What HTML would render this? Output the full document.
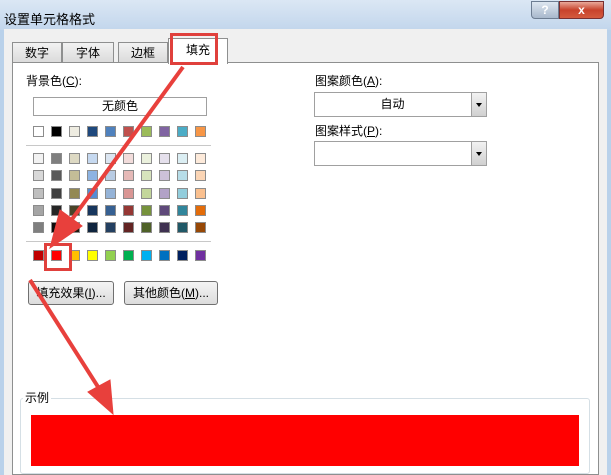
<!DOCTYPE html>
<html><head><meta charset="utf-8"><style>
*{margin:0;padding:0;box-sizing:border-box}
body{width:611px;height:475px;overflow:hidden;position:relative;font-family:"Liberation Sans","Noto Sans CJK SC",sans-serif;font-size:12px;color:#000;background:#b9d1ea}
.a{position:absolute}
.sw{position:absolute;width:11px;height:11px;border:1px solid #8c8c8c}
.btn{position:absolute;height:24px;border:1px solid #707070;border-radius:3px;background:linear-gradient(#f4f4f4,#dcdcdc);text-align:center;line-height:22px}
.combo{position:absolute;border:1px solid #a0a0a0;background:#fff;height:25px}
.dd{position:absolute;right:0;top:0;width:15px;height:23px;border-left:1px solid #a0a0a0;background:linear-gradient(#f2f2f2,#d0d0d0)}
.dd:after{content:"";position:absolute;left:4px;top:10px;border-left:3px solid transparent;border-right:3px solid transparent;border-top:4px solid #000}
</style></head><body>
<div class="a" style="left:0;top:0;width:611px;height:30px;background:linear-gradient(#dbe7f4,#c2d6ec)"></div>
<div class="a" style="left:4px;top:9px;font-size:13px">设置单元格格式</div>
<div class="a" style="left:531px;top:1px;width:28px;height:18px;border:1px solid #6d7d92;border-radius:0 0 0 4px;background:linear-gradient(#dde6f0,#a8b8cc);color:#fff;text-align:center;font-weight:bold;line-height:17px">?</div>
<div class="a" style="left:559px;top:1px;width:45px;height:18px;border:1px solid #7a3030;border-radius:0 0 4px 0;background:linear-gradient(#e9a99a,#c8432c 50%,#d45b3e);color:#fff;text-align:center;font-weight:bold;line-height:17px">x</div>
<div class="a" style="left:4px;top:29px;width:603px;height:446px;background:#f0f0f0"></div>
<!-- tabs -->
<div class="a" style="left:12px;top:42px;width:50px;height:21px;border:1px solid #8e8f8f;border-bottom:none;background:linear-gradient(#f2f2f2,#dadada);text-align:center;line-height:20px">数字</div>
<div class="a" style="left:62px;top:42px;width:52px;height:21px;border:1px solid #8e8f8f;border-bottom:none;background:linear-gradient(#f2f2f2,#dadada);text-align:center;line-height:20px">字体</div>
<div class="a" style="left:118px;top:42px;width:50px;height:21px;border:1px solid #8e8f8f;border-bottom:none;background:linear-gradient(#f2f2f2,#dadada);text-align:center;line-height:20px">边框</div>
<div class="a" style="left:12px;top:62px;width:587px;height:413px;background:#fff;border:1px solid #8e8f8f"></div>
<div class="a" style="left:168px;top:38px;width:60px;height:26px;background:#fff;border:1px solid #8e8f8f;border-bottom:none;text-align:center;line-height:22px">填充</div>
<div class="a" style="left:146px;top:33px;width:45px;height:32px;border:3px solid #e8413e;left:146px;display:none"></div>
<div class="a" style="left:170px;top:33px;width:48px;height:32px;border:3px solid #e0403c"></div>
<div class="a" style="left:26px;top:72px">背景色(<u>C</u>):</div>
<div class="a" style="left:33px;top:97px;width:174px;height:19px;border:1px solid #a0a0a0;text-align:center;line-height:17px">无颜色</div>
<div class="a" style="left:26px;top:145px;width:185px;height:1px;background:#c8c8c8"></div>
<div class="a" style="left:26px;top:241px;width:185px;height:1px;background:#c8c8c8"></div>
<div id="sw"></div>
<div class="a" style="left:44px;top:243px;width:28px;height:28px;border:3px solid #e0403c"></div>
<div class="btn" style="left:28px;top:281px;width:86px">填充效果(<u>I</u>)...</div>
<div class="btn" style="left:124px;top:281px;width:94px">其他颜色(<u>M</u>)...</div>
<div class="a" style="left:315px;top:72px">图案颜色(<u>A</u>):</div>
<div class="combo" style="left:314px;top:92px;width:173px"><div style="position:absolute;left:0;right:16px;text-align:center;line-height:23px">自动</div><div class="dd"></div></div>
<div class="a" style="left:315px;top:122px">图案样式(<u>P</u>):</div>
<div class="combo" style="left:314px;top:141px;width:173px"><div class="dd"></div></div>
<div class="a" style="left:20px;top:398px;width:570px;height:76px;border:1px solid #d5dfe5;border-radius:3px"></div>
<div class="a" style="left:23px;top:389px;background:#fff;padding:0 2px">示例</div>
<div class="a" style="left:31px;top:415px;width:548px;height:51px;background:#ff0000"></div>
<svg class="a" style="left:0;top:0" width="611" height="475">
<g fill="#e8403c" stroke="#e8403c">
<line x1="183" y1="67" x2="70" y2="222" stroke-width="4"/>
<polygon points="50,248 60,210 82,226"/>
<line x1="30" y1="280" x2="100" y2="390" stroke-width="4"/>
<polygon points="113,414 88,392 110,380"/>
</g></svg>
<script>
var c=[["#fff","#000","#eeece1","#1f497d","#4f81bd","#c0504d","#9bbb59","#8064a2","#4bacc6","#f79646"],
["#f2f2f2","#7f7f7f","#ddd9c3","#c6d9f0","#dbe5f1","#f2dcdb","#ebf1dd","#e5e0ec","#dbeef3","#fdeada"],
["#d8d8d8","#595959","#c4bd97","#8db3e2","#b8cce4","#e5b9b7","#d7e3bc","#ccc1d9","#b7dde8","#fbd5b5"],
["#bfbfbf","#3f3f3f","#938953","#548dd4","#95b3d7","#d99694","#c3d69b","#b2a2c7","#92cddc","#fac08f"],
["#a5a5a5","#262626","#494429","#17365d","#366092","#953734","#76923c","#5f497a","#31859b","#e36c09"],
["#7f7f7f","#0c0c0c","#1d1b10","#0f243e","#244061","#632423","#4f6128","#3f3151","#205867","#974806"],
["#c00000","#ff0000","#ffc000","#ffff00","#92d050","#00b050","#00b0f0","#0070c0","#002060","#7030a0"]];
var ys=[126,153,170,188,205,222,250],h="";
for(var r=0;r<7;r++)for(var i=0;i<10;i++){h+='<div class="sw" style="left:'+(33+i*18)+'px;top:'+ys[r]+'px;background:'+c[r][i]+'"></div>';}
document.getElementById("sw").innerHTML=h;
</script>
</body></html>
